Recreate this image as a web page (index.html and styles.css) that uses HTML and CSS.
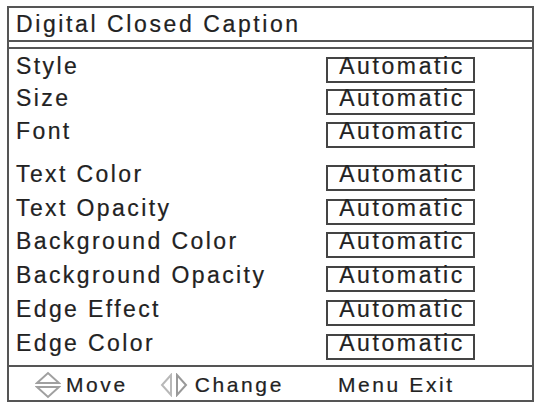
FILE: index.html
```html
<!DOCTYPE html>
<html lang="en">
<head>
    <meta charset="UTF-8">
    <title>Digital Closed Caption</title>
    <link rel="stylesheet" href="styles.css">
</head>
<body>
    <div class="osd">
        <div class="title">Digital Closed Caption</div>
        <div class="rows">
            <div class="row compact"><span class="label">Style</span><span class="value">Automatic</span></div>
            <div class="row"><span class="label">Size</span><span class="value">Automatic</span></div>
            <div class="row compact group-end"><span class="label">Font</span><span class="value">Automatic</span></div>
            <div class="row"><span class="label">Text Color</span><span class="value">Automatic</span></div>
            <div class="row"><span class="label">Text Opacity</span><span class="value">Automatic</span></div>
            <div class="row"><span class="label">Background Color</span><span class="value">Automatic</span></div>
            <div class="row"><span class="label">Background Opacity</span><span class="value">Automatic</span></div>
            <div class="row"><span class="label">Edge Effect</span><span class="value">Automatic</span></div>
            <div class="row"><span class="label">Edge Color</span><span class="value">Automatic</span></div>
        </div>
        <div class="footer">
            <svg class="icon-updown" width="26" height="30" viewBox="0 0 26 30">
                <polygon points="2,13 13,3 24,13" fill="none" stroke="#a0a0a0" stroke-width="2"/>
                <polygon points="2,17 13,27 24,17" fill="none" stroke="#a0a0a0" stroke-width="2"/>
            </svg>
            <span class="hint">Move</span>
            <svg class="icon-leftright" width="28" height="24" viewBox="0 0 28 24">
                <polygon points="11,2 2,12 11,22" fill="none" stroke="#b8b8b8" stroke-width="2"/>
                <polygon points="17,2 26,12 17,22" fill="none" stroke="#999" stroke-width="2"/>
            </svg>
            <span class="hint">Change</span>
            <span class="hint exit">Menu Exit</span>
        </div>
    </div>
</body>
</html>
```

FILE: styles.css
```css
body {
    margin: 0;
    background: #fff;
    font-family: "Liberation Sans", Arial, sans-serif;
    color: #222;
}

.osd {
    margin: 6px 0 0 7px;
    width: 523px;
    height: 392px;
    border: 2px solid #555;
    display: flex;
    flex-direction: column;
    -webkit-text-stroke: 0.2px #222;
}

.title {
    height: 31px;
    padding: 1px 0 0 7px;
    font-size: 23px;
    line-height: 31px;
    letter-spacing: 2.6px;
    border-bottom: 2px solid #555;
    margin-bottom: 5px;
}

.rows {
    border-top: 2px solid #555;
    padding-top: 4px;
    flex: 1;
}

.row {
    display: flex;
    align-items: baseline;
    height: 33.8px;
    padding-left: 7px;
}

.row.compact {
    height: 31.5px;
}

.row.group-end {
    margin-bottom: 11px;
}

.label {
    width: 310px;
    font-size: 23px;
    line-height: 26px;
    letter-spacing: 2.4px;
}

.value {
    width: 145px;
    height: 22px;
    border: 2px solid #444;
    font-size: 23px;
    line-height: 14px;
    letter-spacing: 2.6px;
    text-align: center;
    text-indent: 3px;
}

.footer {
    height: 31px;
    padding-top: 2px;
    border-top: 2px solid #555;
    display: flex;
    align-items: center;
    padding-left: 26px;
    font-size: 21px;
    letter-spacing: 2.6px;
}

.icon-updown {
    margin-right: 5px;
}

.icon-leftright {
    margin-left: 32px;
    margin-right: 7px;
}

.exit {
    margin-left: 54px;
}
```
